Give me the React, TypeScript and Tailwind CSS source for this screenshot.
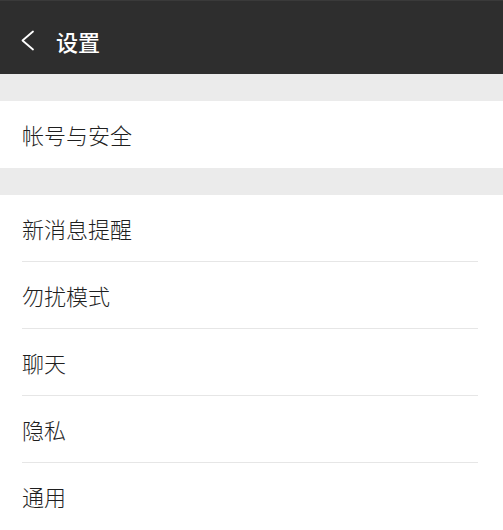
const groups = [['帐号与安全'], ['新消息提醒', '勿扰模式', '聊天', '隐私', '通用']];

export default function App() {
  return (
    <div
      className="min-h-screen bg-[#ebebeb] text-[#1f1f1f]"
      style={{ fontFamily: '"Noto Sans CJK SC", "Noto Sans", sans-serif' }}
    >
      <div className="h-[74px] bg-[#2e2e2e] flex items-center pt-[6px] pl-[20px] border-t border-[#3a3a3a]">
        <svg width="15" height="21" viewBox="0 0 15 21" fill="none">
          <polyline points="13,1.5 2.5,10.5 13,19.5" stroke="white" strokeWidth="1.8" strokeLinecap="round" strokeLinejoin="round" />
        </svg>
        <span className="ml-[21px] text-[22px] font-medium text-white leading-none">设置</span>
      </div>

      {groups.map((items, gi) => (
        <div key={gi} className={`mt-[27px] bg-white ${gi === groups.length - 1 ? 'border-b border-[#e6e6e6]' : ''}`}>
          {items.map((label, i) => (
            <div
              key={label}
              className={`ml-[22px] mr-[25px] h-[67px] flex items-center text-[22px] font-light ${
                i < items.length - 1 ? 'border-b border-[#e6e6e6]' : ''
              }`}
            >
              {label}
            </div>
          ))}
        </div>
      ))}
    </div>
  );
}
